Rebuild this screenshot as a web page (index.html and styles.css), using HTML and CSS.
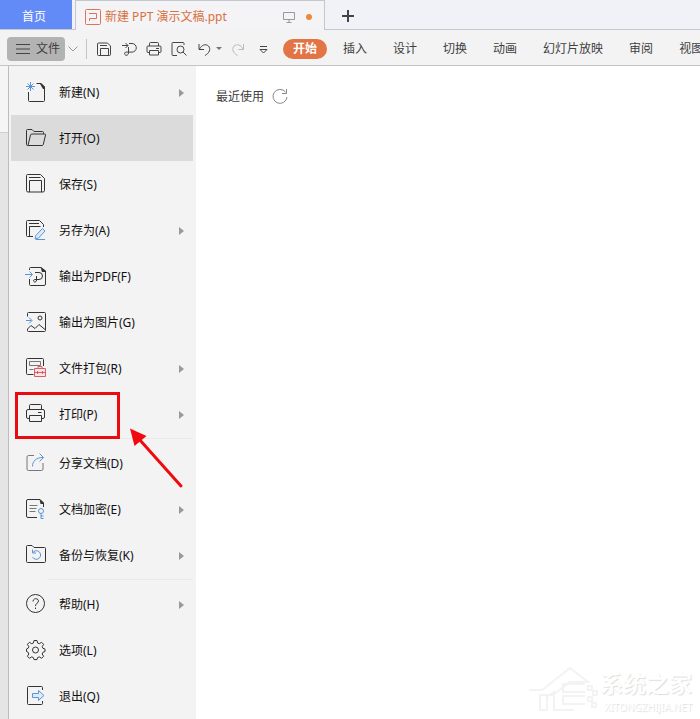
FILE: index.html
```html
<!DOCTYPE html>
<html lang="zh-CN">
<head>
<meta charset="utf-8">
<title>新建 PPT 演示文稿.ppt</title>
<link rel="stylesheet" href="styles.css">
</head>
<body>
<header class="tabs">
  <button class="home-tab">首页</button>
  <div class="doc-tab">
    <svg class="doc-icon" viewBox="0 0 16 16"><rect x=".5" y=".5" width="15" height="15" rx="1"/><path d="M4 4.500h7.500v5H4.500V12"/></svg>
    <span class="doc-name">新建 PPT 演示文稿.ppt</span>
    <svg class="screen-icon" viewBox="0 0 12 12"><path d="M.5 1.500h11v7H.5zM6 8.500v2.500M3.500 11.500h5"/></svg>
    <span class="unsaved"></span>
  </div>
  <button class="add-tab" aria-label="新建标签"><svg viewBox="0 0 12 12"><path d="M6 0v12M0 6h12"/></svg></button>
</header>

<nav class="toolbar">
  <button class="file-button"><svg viewBox="0 0 14 10"><path d="M0 .5h14M0 5h14M0 9.500h14"/></svg>文件</button>
  <button class="file-more" aria-label="更多"><svg viewBox="0 0 10 6"><path d="M.5.500 5 5 9.500.5"/></svg></button>
  <div class="quick">
    <button class="tool" aria-label="保存"><svg viewBox="0 0 16 16"><path d="M2.500 2h9l3 3v8.500q0 1-1 1h-11q-1 0-1-1V3q0-1 1-1zM4.500 14V7.500h8V14M4 4.500h7"/></svg></button>
    <button class="tool" aria-label="输出为PDF"><svg viewBox="0 0 16 16"><path d="M1 4.500h6M4.500 2 7 4.500 4.500 7M8 2.500h3a4.300 4.300 0 0 1 0 8.600H4.500a1.700 1.700 0 1 0 1.700 3q1.300-.7 1.300-2V6"/></svg></button>
    <button class="tool" aria-label="打印"><svg viewBox="0 0 16 16"><path d="M3.500 5V2.500q0-1 1-1h7q1 0 1 1V5M3.500 11.500H2q-1 0-1-1V6q0-1 1-1h12q1 0 1 1v4.500q0 1-1 1h-1.500M3.500 9.500h9v4.500H3.500zM10 7.500h3"/></svg></button>
    <button class="tool" aria-label="打印预览"><svg viewBox="0 0 16 16"><path d="M6 14.500H2q-1 0-1-1v-11q0-1 1-1h10q1 0 1 1V4M12 11l3.500 3.500"/><circle cx="9.500" cy="8.500" r="3.500"/></svg></button>
    <button class="tool" aria-label="撤销"><svg viewBox="0 0 16 16"><path d="M3 3v5.500h5M3.500 8c2-4 6-5.500 9-3 2.500 3 1 7-3.500 9.500"/></svg></button>
    <button class="caret" aria-label="撤销列表"></button>
    <button class="tool faded" aria-label="恢复"><svg viewBox="0 0 16 16"><path d="M12.500 3v5.500h-5M12 8c-2-4-6-5.500-9-3-2.500 3-1 7 3.500 9.500"/></svg></button>
    <button class="tool more" aria-label="自定义"><svg viewBox="0 0 16 16"><path d="M4 5.500h7M4 8.500 7.500 12 11 8.500z"/></svg></button>
  </div>
  <div class="ribbon">
    <button class="active">开始</button>
    <button>插入</button>
    <button>设计</button>
    <button>切换</button>
    <button>动画</button>
    <button>幻灯片放映</button>
    <button>审阅</button>
    <button>视图</button>
  </div>
</nav>

<div class="body">
  <div class="gutter"></div>
  <aside class="menu">
    <button class="item sub"><svg viewBox="0 0 22 22"><path d="M3.500 11v8.500q0 1 1 1h14q1 0 1-1V6L16 2.500h-4.500"/><path class="solid" d="M14.500 2H16l4 4v2h-2z"/><path class="blue" d="M5.500 1v9M1 5.500h9M2.500 2.500l6 6M8.500 2.500l-6 6"/></svg>新建(N)</button>
    <button class="item selected"><svg viewBox="0 0 22 22"><path d="M3.500 18.500h-1q-1 0-1-1v-14q0-1 1-1h4.500l2 2h8.500q1 0 1 1V7M3 18.500 5.500 8q.3-1 1.300-1h12.700q1.200 0 1 1L18.300 17.500q-.3 1-1.300 1H3z"/></svg>打开(O)</button>
    <button class="item"><svg viewBox="0 0 22 22"><path d="M2.500 1.500h13l4 4v12q0 1.500-1.500 1.500H3q-1.500 0-1.500-1.500v-15q0-1 1-1zM4.500 19V7.500h12V19M4 4.500h11.500"/></svg>保存(S)</button>
    <button class="item sub"><svg viewBox="0 0 22 22"><path d="M8 17.500H2.500q-1 0-1-1v-14q0-1 1-1h12l4 4V8M4.500 17V7.500h11M4 4.500h10"/><path class="blue tint" d="M17.500 9.500 20 12l-6.500 7-3.500 1 .8-3.500zM11 20.500h9"/></svg>另存为(A)</button>
    <button class="item"><svg viewBox="0 0 22 22"><path d="M4.500 5V3.500q0-1 1-1H16L20.500 6v13q0 1.500-1.500 1.500H5.500q-1 0-1-1V14M10 7.500h4a3.500 3.500 0 0 1 0 7H9.500a1.300 1.300 0 1 0 1.300 2.200q.7-.5.700-1.700V11"/><path class="solid" d="M15.500 2 21 6v1h-4z"/><path class="blue" d="M0 9.500h7M4.500 6.500l3 3-3 3"/></svg>输出为PDF(F)</button>
    <button class="item"><svg viewBox="0 0 22 22"><path d="M2.500 5.500V2.500q0-1 1-1h16q1 0 1 1v17q0 1-1 1h-16q-1 0-1-1V18l3.500-3.500 4 3 4-4 6 5"/><circle cx="15" cy="7" r="2"/><path class="blue" d="M1 9.500h5.500M4 6.500l3 3-3 3"/></svg>输出为图片(G)</button>
    <button class="item sub"><svg viewBox="0 0 22 22"><path d="M8.500 17.500h-6q-1 0-1-1v-14q0-1 1-1h15q1 0 1 1V9"/><path class="gray" d="M4.500 4.500h11v4h-11zM4.500 12.500h4"/><path class="red" d="M9.500 11.500h11v8h-11zM13 11V9.500h4V11M9.500 15.500h11M12.500 14v3M17.500 14v3"/></svg>文件打包(R)</button>
    <div class="item-wrap">
      <button class="item sub"><svg viewBox="0 0 22 22"><path d="M4.500 6.500v-4q0-1 1-1h10q1 0 1 1v4M4.500 15.500H3q-1.500 0-1.500-1.500V8q0-1.500 1.500-1.500h15q1.500 0 1.500 1.500v6q0 1.500-1.500 1.500h-1.500M4.500 12.500h12v6h-12zM13 9.500h3.500"/></svg>打印(P)</button>
      <span class="mark-box"></span>
      <svg class="mark-arrow" viewBox="0 0 56 62"><path class="mark-shaft" d="M53 59 11 12"/><path class="mark-head" d="M2 1.500 18.500 9 6.500 19z"/></svg>
    </div>
    <hr>
    <button class="item"><svg viewBox="0 0 22 22"><path class="gray" d="M9 3.500H3.500q-1.500 0-1.500 1.500v12q0 1.500 1.500 1.500h13q1.500 0 1.500-1.500V11"/><path class="blue" d="M7.500 14.500C7.500 9 11 5.500 18.500 5.500M14.500 1.500l4 4-4 4"/></svg>分享文档(D)</button>
    <button class="item sub"><svg viewBox="0 0 22 22"><path d="M12 19.500H3q-1.500 0-1.500-1.500V3q0-1.500 1.500-1.500h12L18.500 5v4"/><path class="solid" d="M14.500 1 19 5v1h-3.500z"/><path class="gray" d="M4.500 7.500h8M4.500 10.500h7M4.500 13.500h6"/><circle class="blue" cx="16" cy="13" r="2.500"/><path class="blue" d="M16 15.500v5M16 18h2.500M16 20.500h2.500"/></svg>文档加密(E)</button>
    <button class="item sub"><svg viewBox="0 0 22 22"><path d="M2.500 1.500H7l2 2h10.500q1 0 1 1v13q0 1-1 1h-17q-1 0-1-1v-15q0-1 1-1z"/><path class="blue" d="M7.500 5.500v3.500H11M7.500 9a4.300 4.300 0 1 1 0 4"/></svg>备份与恢复(K)</button>
    <hr>
    <button class="item sub"><svg viewBox="0 0 22 22"><circle cx="10.500" cy="10.500" r="9"/><path d="M8 8.500c0-3.800 5.500-3.500 5.500-.5 0 2-3 2.300-3 5M10.500 14.500V16"/></svg>帮助(H)</button>
    <button class="item"><svg viewBox="0 0 22 22"><path d="M9 1.500h3l.6 2.500 1.700.7 2.300-1.400 2 2-1.400 2.300.7 1.700 2.100.7v2.500l-2.100.8-.7 1.700 1.400 2.300-2 2-2.300-1.400-1.700.7-.6 2H9l-.6-2-1.700-.7-2.300 1.400-2-2 1.400-2.300-.7-1.700L1.500 12.500V10l1.600-.7.7-1.700-1.400-2.300 2-2 2.300 1.400L8.400 4z"/><circle cx="10.500" cy="11" r="3"/></svg>选项(L)</button>
    <button class="item"><svg viewBox="0 0 22 22"><path d="M17.500 5V2.500q0-1-1-1h-13q-1 0-1 1v16q0 1 1 1h13q1 0 1-1V16"/><path class="blue tint" d="M7.500 8.500h6V5.500l5.500 5-5.500 5v-3h-6z"/></svg>退出(Q)</button>
  </aside>
  <main class="recent">
    <div class="recent-head">最近使用
      <button aria-label="刷新"><svg viewBox="0 0 16 16"><path d="M13.500 4A7 7 0 1 0 15 9M14.500 1v4.500H10"/></svg></button>
    </div>
    <div class="watermark">
      <svg viewBox="0 0 72 48"><path d="M1 24h13L42 2l18 14H42L25 29H12v15h7V31l7-5v18h20M57 18H35v8h22M57 30H35v8h22M60 20h4v4h-4zM65 25h4v4h-4zM60 31h4v4h-4zM64 37h4v4h-4z"/></svg>
      <div><strong>系统之家</strong><small>XITONGZHIJIA.NET</small></div>
    </div>
  </main>
</div>
</body>
</html>
```
FILE: styles.css
```css
* { box-sizing: border-box; }

body {
  margin: 0;
  min-height: 100vh;
  display: flex;
  flex-direction: column;
  overflow-x: hidden;
  background: #f3f3f3;
  color: #404040;
  font: 12px/18px "Noto Sans", "Noto Sans CJK SC", sans-serif;
}

button {
  margin: 0;
  padding: 0;
  border: 0;
  background: none;
  color: inherit;
  font: inherit;
  white-space: nowrap;
}

svg {
  display: block;
  flex: none;
  fill: none;
  stroke: #444;
}

/* window tabs */
.tabs {
  display: flex;
  height: 30px;
  border-bottom: 1px solid #c3c8ce;
  background: #f1f2f7;
}
.home-tab {
  width: 72px;
  margin-right: 3px;
  padding: 4px 4px 0 0;
  background: #638bf8;
  color: #fff;
}
.doc-tab {
  display: flex;
  align-items: center;
  width: 250px;
  height: 30px;
  padding: 3px 12px 0 9px;
  border: 1px solid #c3c8ce;
  border-bottom: 0;
  background: #f4f4f6;
  color: #d9703f;
}
.doc-icon { width: 16px; height: 16px; stroke: #dd7357; }
.doc-name { margin: 0 auto 0 4px; }
.screen-icon { width: 12px; height: 12px; stroke: #999; }
.unsaved {
  width: 6px;
  height: 6px;
  margin-left: 11px;
  border-radius: 50%;
  background: #f0883c;
}
.add-tab { padding: 3px 0 0 17px; }
.add-tab svg { width: 12px; height: 12px; stroke-width: 2; }

/* toolbar */
.toolbar {
  display: flex;
  align-items: center;
  height: 36px;
  padding: 2px 0 0 7px;
  border-bottom: 1px solid #c4c4c4;
  overflow: hidden;
}
.file-button {
  display: flex;
  align-items: center;
  gap: 6px;
  height: 24px;
  padding: 0 5px 0 9px;
  border-radius: 4px;
  background: #b3b3b3;
}
.file-button svg { width: 14px; height: 10px; }
.file-more { padding: 0 8px 0 3px; }
.file-more svg { width: 10px; height: 6px; stroke: #999; }
.quick {
  display: flex;
  align-items: center;
  gap: 9px;
  padding-left: 9px;
  border-left: 1px solid #c4c4c4;
  height: 20px;
}
.tool svg { width: 16px; height: 16px; }
.faded svg { stroke: #bbb; }
.caret {
  margin-left: -5px;
  border: 3px solid transparent;
  border-top-color: #777;
  border-bottom: 0;
}
.ribbon {
  display: flex;
  align-items: center;
  gap: 26px;
  margin-left: 11px;
}
.ribbon button { height: 20px; padding-top: 1px; }
.ribbon .active {
  margin-right: -10px;
  padding: 0 10px;
  border-radius: 10px;
  background: #e37445;
  color: #fff;
  font-weight: bold;
}

/* page body */
.body { display: flex; flex: 1; }
.gutter {
  width: 8px;
  background: linear-gradient(#f5f5f5 66px, #cfcfcf 66px, #cfcfcf 67px, #e5e5e5 67px);
}
.menu {
  flex: none;
  width: 188px;
  padding: 3px 3px 0 2px;
  border-left: 1px solid #bcbcbc;
  background: #f3f3f3;
  color: #111;
}
.item {
  display: flex;
  align-items: center;
  gap: 12px;
  width: 182px;
  height: 46px;
  padding: 2px 9px 0 14px;
}
.item svg { width: 22px; height: 22px; margin-bottom: 2px; stroke: #333; }
.item .blue { stroke: #5b95d6; }
.item .tint { fill: #dceafa; }
.item .red { stroke: #d95d66; fill: #fae5e6; }
.item .gray { stroke: #777; }
.item .solid { fill: #333; stroke: none; }
.selected { background: #dbdbdb; }
.sub::after {
  content: "";
  margin-left: auto;
  border: 4px solid transparent;
  border-left: 5px solid #999;
  border-right: 0;
}
.menu hr {
  height: 1px;
  margin: 1px 0 1px 37px;
  border: 0;
  background: #e9e9e9;
}

/* highlight drawn over the print entry */
.item-wrap { position: relative; }
.mark-box {
  position: absolute;
  left: 4px;
  top: 1px;
  width: 105px;
  height: 47px;
  border: 3px solid #ea0a0f;
}
.mark-arrow {
  position: absolute;
  left: 117px;
  top: 36px;
  width: 56px;
  height: 62px;
  z-index: 1;
}
.mark-shaft { stroke: #f00a10; stroke-width: 3; stroke-linecap: round; }
.mark-head { fill: #f00a10; stroke: none; }

/* recent files */
.recent {
  position: relative;
  flex: 1;
  padding: 22px 20px;
  background: #fff;
}
.recent-head {
  display: flex;
  align-items: center;
  gap: 8px;
}
.recent-head svg { width: 16px; height: 16px; margin-bottom: 2px; stroke: #888; }
.watermark {
  position: absolute;
  right: 8px;
  bottom: 5px;
  display: flex;
  align-items: center;
  color: #fff;
  text-shadow: 1px 1px 1px #ddd;
}
.watermark svg {
  width: 72px;
  height: 48px;
  stroke: #f3f3f3;
  stroke-width: 2;
}
.watermark strong, .watermark small { display: block; text-align: right; }
.watermark strong { font-size: 23px; line-height: 34px; }
.watermark small { font-size: 10px; line-height: 14px; }
```
